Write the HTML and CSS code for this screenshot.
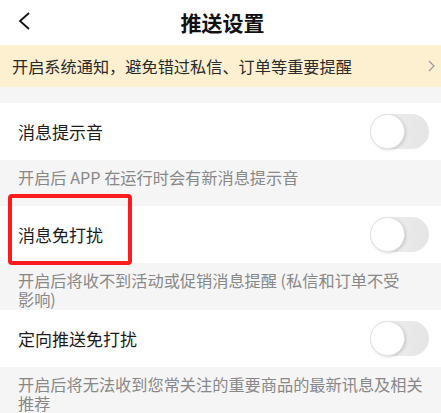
FILE: index.html
```html
<!DOCTYPE html>
<html lang="zh-CN">
<head>
    <meta charset="UTF-8">
    <meta name="viewport" content="width=device-width, initial-scale=1.0">
    <title>推送设置</title>
    <link rel="stylesheet" href="styles.css">
</head>
<body>
    <header class="topbar">
        <svg class="back" width="14" height="18" viewBox="0 0 14 18">
            <path d="M12 1 L3 9 L12 17" fill="none" stroke="#111" stroke-width="1.8"/>
        </svg>
        <h1>推送设置</h1>
    </header>

    <div class="notice">
        <span>开启系统通知，避免错过私信、订单等重要提醒</span>
        <svg class="arrow" width="8" height="12" viewBox="0 0 8 12">
            <path d="M1 1 L6 6 L1 11" fill="none" stroke="#999" stroke-width="1.2"/>
        </svg>
    </div>

    <div class="spacer"></div>

    <div class="row">
        <span class="label">消息提示音</span>
        <span class="switch"></span>
    </div>
    <p class="desc">开启后 APP 在运行时会有新消息提示音</p>

    <div class="row">
        <span class="label">消息免打扰</span>
        <span class="switch"></span>
        <!-- red highlight drawn over the row -->
        <div class="mark"></div>
    </div>
    <p class="desc">开启后将收不到活动或促销消息提醒 (私信和订单不受<br>影响)</p>

    <div class="row">
        <span class="label">定向推送免打扰</span>
        <span class="switch"></span>
    </div>
    <p class="desc">开启后将无法收到您常关注的重要商品的最新讯息及相关推荐</p>
</body>
</html>
```

FILE: styles.css
```css
body {
    margin: 0;
    background-color: #f5f5f5;
    font-family: "Noto Sans CJK SC", "Noto Sans", sans-serif;
    color: #222;
    width: 441px;
    overflow: hidden;
}

.topbar {
    height: 45px;
    background-color: #fff;
    display: flex;
    align-items: center;
    justify-content: center;
    position: relative;
}

.topbar h1 {
    margin: 0;
    font-size: 21px;
    font-weight: bold;
    color: #111;
    line-height: 1;
    padding-left: 4px;
}

.back {
    position: absolute;
    left: 17px;
    top: 12px;
}

.notice {
    height: 42px;
    background-color: #fcf0d1;
    display: flex;
    align-items: center;
    justify-content: space-between;
    padding: 0 5px 0 12px;
    font-size: 16.2px;
    color: #2a2a2a;
}

.spacer {
    height: 16px;
}

.row {
    height: 57px;
    background-color: #fff;
    display: flex;
    align-items: center;
    justify-content: space-between;
    padding: 0 12px 0 18px;
    position: relative;
}

.label {
    font-size: 17px;
    color: #1c1c1c;
}

.switch {
    width: 59px;
    height: 35px;
    border-radius: 18px;
    background: linear-gradient(to right, #f2f2f2, #e4e4e4);
    position: relative;
}

.switch::after {
    content: "";
    position: absolute;
    left: 0;
    top: 0;
    width: 33px;
    height: 33px;
    border-radius: 50%;
    background-color: #fff;
    border: 1px solid #e2e2e2;
    box-shadow: 1px 1px 3px rgba(0, 0, 0, 0.15);
}

.desc {
    margin: 0;
    box-sizing: border-box;
    min-height: 46px;
    padding: 8px 8px 1px 18px;
    font-size: 16.2px;
    line-height: 19px;
    color: #888;
}

.mark {
    position: absolute;
    left: 8px;
    top: -12px;
    width: 116px;
    height: 63px;
    border: 4px solid #fb1d1d;
    border-radius: 4px;
}
```
